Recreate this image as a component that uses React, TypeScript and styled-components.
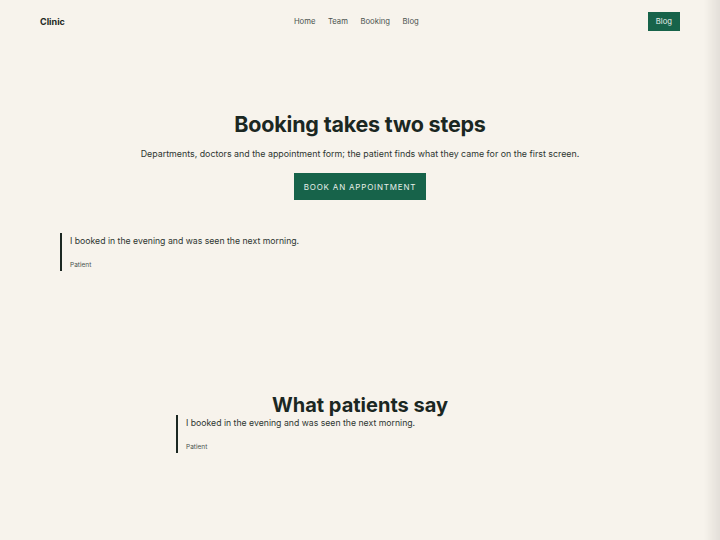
import React from "react";
import styled, { createGlobalStyle } from "styled-components";

const Global = createGlobalStyle`
  *, *::before, *::after { box-sizing: border-box; }
  html, body { margin: 0; padding: 0; background: #f7f3ec; }
  body {
    font-family: "Inter", "Liberation Sans", sans-serif;
    color: #1b2722;
    min-height: 540px;
  }
  body::after {
    content: "";
    position: fixed;
    top: 0; right: 0; bottom: 0;
    width: 16px;
    background: linear-gradient(to right, rgba(0,0,0,0), rgba(0,0,0,0.08));
    pointer-events: none;
  }
`;

const Page = styled.div`
  padding: 0 40px;
`;

const Header = styled.header`
  display: flex;
  justify-content: space-between;
  align-items: center;
  height: 42px;
  padding-top: 1px;
`;

const Logo = styled.div`
  font-weight: 700;
  font-size: 9px;
  color: #1b2722;
`;

const Nav = styled.nav`
  display: flex;
  gap: 12.5px;
  font-size: 7.7px;
  color: #4a524e;
`;

const NavLink = styled.a`
  color: inherit;
  text-decoration: none;
`;

const HeaderCta = styled.a`
  background: #17634a;
  color: #e6efe9;
  font-size: 7.7px;
  padding: 5px 8px;
  text-decoration: none;
  line-height: 9px;
`;

const Hero = styled.section`
  display: flex;
  flex-direction: column;
  align-items: center;
  padding-top: 68px;
`;

const H1 = styled.h1`
  margin: 0;
  font-size: 21.5px;
  font-weight: 700;
  letter-spacing: -0.2px;
  line-height: 28px;
  color: #1b2722;
`;

const Lead = styled.p`
  margin: 10px 0 0;
  font-size: 8.85px;
  color: #2e3632;
  line-height: 12px;
`;

const Button = styled.a`
  margin-top: 13px;
  display: flex;
  align-items: center;
  justify-content: center;
  width: 132px;
  height: 27px;
  background: #17634a;
  color: #e6efe9;
  font-size: 8px;
  letter-spacing: 0.8px;
  text-decoration: none;
`;

const Quote = styled.blockquote<{ $width?: number }>`
  margin: 0;
  border-left: 2px solid #1b2722;
  padding: 3px 0 1px 8px;
  display: flex;
  flex-direction: column;
  gap: 14px;
  ${(p) => (p.$width ? `width: ${p.$width}px; align-self: center;` : "")}
`;

const QuoteText = styled.p`
  margin: 0;
  font-size: 8.7px;
  line-height: 11px;
  color: #2e3632;
`;

const QuoteBy = styled.cite`
  font-style: normal;
  font-size: 6.5px;
  line-height: 9px;
  color: #4a524e;
`;

const FirstQuoteWrap = styled.div`
  padding: 33px 0 0 20px;
`;

const Reviews = styled.section`
  display: flex;
  flex-direction: column;
  align-items: center;
  padding-top: 124px;
`;

const H2 = styled.h2`
  margin: 0;
  font-size: 20px;
  font-weight: 700;
  line-height: 20px;
  color: #1b2722;
`;

export default function App() {
  return (
    <>
      <Global />
      <Page>
        <Header>
          <Logo>Clinic</Logo>
          <Nav>
            <NavLink>Home</NavLink>
            <NavLink>Team</NavLink>
            <NavLink>Booking</NavLink>
            <NavLink>Blog</NavLink>
          </Nav>
          <HeaderCta>Blog</HeaderCta>
        </Header>
        <Hero>
          <H1>Booking takes two steps</H1>
          <Lead>
            Departments, doctors and the appointment form; the patient finds what they came for on the first screen.
          </Lead>
          <Button>BOOK AN APPOINTMENT</Button>
        </Hero>
        <FirstQuoteWrap>
          <Quote>
            <QuoteText>I booked in the evening and was seen the next morning.</QuoteText>
            <QuoteBy>Patient</QuoteBy>
          </Quote>
        </FirstQuoteWrap>
        <Reviews>
          <H2>What patients say</H2>
          <Quote $width={368}>
            <QuoteText>I booked in the evening and was seen the next morning.</QuoteText>
            <QuoteBy>Patient</QuoteBy>
          </Quote>
        </Reviews>
      </Page>
    </>
  );
}
